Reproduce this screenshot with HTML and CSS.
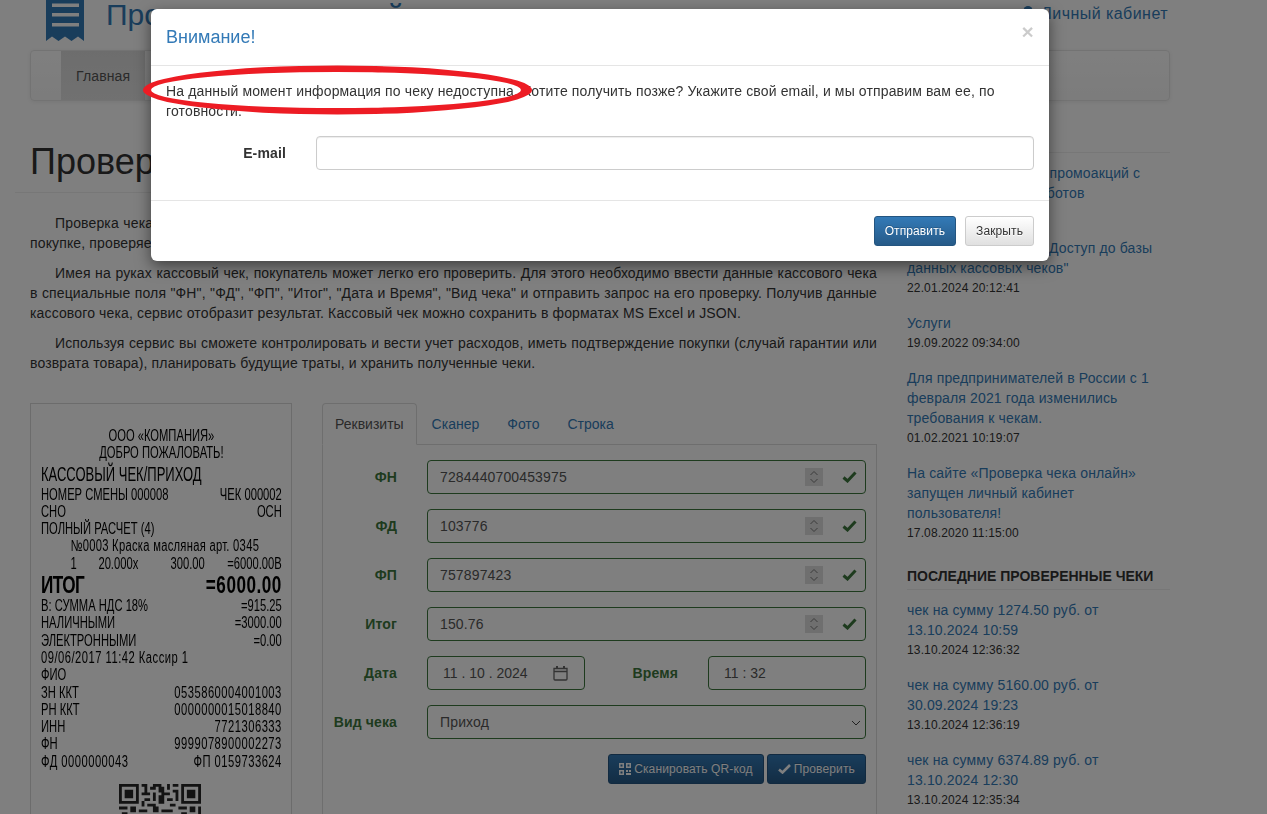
FILE: index.html
```html
<!DOCTYPE html>
<html lang="ru">
<head>
<meta charset="utf-8">
<title>Проверка чека онлайн</title>
<link rel="stylesheet" href="styles.css">
</head>
<body>
<div class="container">
  <header class="site-header">
    <svg class="logo" viewBox="0 0 38 41" width="38" height="41"><path fill="#337ab7" fill-rule="evenodd" d="M0 0H38V41L32 36.500 25.500 41 19 36.500 12.500 41 6 36.500 0 41ZM6 3.500V7H33V3.500ZM6 13V16.500H33V13ZM6 23V26.500H33V23Z"/></svg>
    <a class="site-title">Проверка чека онлайн</a>
    <a class="cabinet">
      <svg class="user-icon" viewBox="0 0 14 16" width="14" height="16"><circle cx="7" cy="4.500" r="4.500" fill="#337ab7"/><path fill="#337ab7" d="M0 16C0 11 3 9 7 9S14 11 14 16Z"/></svg>
      Личный кабинет
    </a>
  </header>
  <nav class="navbar"><a class="nav-item active">Главная</a></nav>
  <div class="layout">
    <main class="main">
      <h1 class="page-title">Проверка чека онлайн</h1>
      <p class="lead">Проверка чека онлайн – это удобный сервис для проверки подлинности кассового чека, полученного вами в магазине при покупке, проверяется по данным фискального накопителя и оператора фискальных данных.</p>
      <p class="lead">Имея на руках кассовый чек, покупатель может легко его проверить. Для этого необходимо ввести данные кассового чека в специальные поля "ФН", "ФД", "ФП", "Итог", "Дата и Время", "Вид чека" и отправить запрос на его проверку. Получив данные кассового чека, сервис отобразит результат. Кассовый чек можно сохранить в форматах MS Excel и JSON.</p>
      <p class="lead">Используя сервис вы сможете контролировать и вести учет расходов, иметь подтверждение покупки (случай гарантии или возврата товара), планировать будущие траты, и хранить полученные чеки.</p>
      <div class="check-area">
        <div class="receipt">
          <div class="receipt-body">
            <div class="r-center">ООО «КОМПАНИЯ»</div>
            <div class="r-center">ДОБРО ПОЖАЛОВАТЬ!</div>
            <div class="r-big">КАССОВЫЙ ЧЕК/ПРИХОД</div>
            <div class="r-row"><span>НОМЕР СМЕНЫ 000008</span><span>ЧЕК 000002</span></div>
            <div class="r-row"><span>СНО</span><span>ОСН</span></div>
            <div class="r-row"><span>ПОЛНЫЙ РАСЧЕТ (4)</span></div>
            <div class="r-row r-indent"><span class="r-wide">№0003 Краска масляная арт. 0345</span></div>
            <div class="r-row r-indent"><span class="r-qty">1</span><span class="r-mul">20.000x</span><span class="r-price">300.00</span><span>=6000.00В</span></div>
            <div class="r-row r-total"><span class="r-total-label">ИТОГ</span><span class="r-total-sum">=6000.00</span></div>
            <div class="r-row"><span>В: СУММА НДС 18%</span><span>=915.25</span></div>
            <div class="r-row"><span>НАЛИЧНЫМИ</span><span>=3000.00</span></div>
            <div class="r-row"><span>ЭЛЕКТРОННЫМИ</span><span>=0.00</span></div>
            <div class="r-row"><span class="r-num">09/06/2017 11:42 Кассир 1</span></div>
            <div class="r-row"><span>ФИО</span></div>
            <div class="r-row"><span>ЗН ККТ</span><span class="r-num">0535860004001003</span></div>
            <div class="r-row"><span>РН ККТ</span><span class="r-num">0000000015018840</span></div>
            <div class="r-row"><span>ИНН</span><span class="r-num">7721306333</span></div>
            <div class="r-row"><span>ФН</span><span class="r-num">9999078900002273</span></div>
            <div class="r-row"><span class="r-num">ФД 0000000043</span><span class="r-num">ФП 0159733624</span></div>
          </div>
          <svg class="qr" viewBox="0 0 29 29" width="82" height="82"><path fill="#262626" fill-rule="evenodd" d="M0 0h7v7h-7zM1 1v5h5v-5zM2 2h3v3h-3zM22 0h7v7h-7zM23 1v5h5v-5zM24 2h3v3h-3zM0 22h7v7h-7zM1 23v5h5v-5zM2 24h3v3h-3zM8 0h2v1h-2zM12 0h3v1h-3zM17 0h1v2h-1zM19 0h2v1h-2zM9 1h1v2h-1zM11 1h2v1h-2zM14 1h2v2h-2zM19 2h2v1h-2zM8 3h3v1h-3zM12 3h1v3h-1zM15 3h3v1h-3zM20 3h1v3h-1zM9 5h2v1h-2zM14 4h2v3h-2zM17 5h2v1h-2zM8 6h1v2h-1zM10 7h3v1h-3zM18 7h2v1h-2zM0 8h3v1h-3zM4 8h2v2h-2zM7 9h3v1h-3zM12 8h2v2h-2zM15 9h4v1h-4zM21 8h3v1h-3zM25 8h2v2h-2zM28 8h1v3h-1zM1 10h2v2h-2zM6 11h4v1h-4zM11 11h1v3h-1zM13 11h3v1h-3zM18 11h2v2h-2zM22 10h2v2h-2zM26 11h1v2h-1zM0 13h2v2h-2zM3 13h4v1h-4zM8 13h2v2h-2zM13 13h1v2h-1zM15 13h2v2h-2zM21 13h3v1h-3zM25 14h4v1h-4z"/></svg>
        </div>
        <div class="check-form">
          <ul class="tabs">
            <li class="tab active">Реквизиты</li>
            <li class="tab">Сканер</li>
            <li class="tab">Фото</li>
            <li class="tab">Строка</li>
          </ul>
          <form class="tab-panel">
            <div class="form-row">
              <label class="field-label">ФН</label>
              <div class="field"><input class="control" type="text" value="7284440700453975"><span class="spinner"><svg viewBox="0 0 18 18" width="18" height="18"><path class="spin-path" d="M5.500 7L9 3.500 12.500 7M5.500 11L9 14.500 12.500 11"/></svg></span><svg class="tick" viewBox="0 0 15 12" width="15" height="12"><path d="M1.500 6.500L5.500 10 13.500 1.500"/></svg></div>
            </div>
            <div class="form-row">
              <label class="field-label">ФД</label>
              <div class="field"><input class="control" type="text" value="103776"><span class="spinner"><svg viewBox="0 0 18 18" width="18" height="18"><path class="spin-path" d="M5.500 7L9 3.500 12.500 7M5.500 11L9 14.500 12.500 11"/></svg></span><svg class="tick" viewBox="0 0 15 12" width="15" height="12"><path d="M1.500 6.500L5.500 10 13.500 1.500"/></svg></div>
            </div>
            <div class="form-row">
              <label class="field-label">ФП</label>
              <div class="field"><input class="control" type="text" value="757897423"><span class="spinner"><svg viewBox="0 0 18 18" width="18" height="18"><path class="spin-path" d="M5.500 7L9 3.500 12.500 7M5.500 11L9 14.500 12.500 11"/></svg></span><svg class="tick" viewBox="0 0 15 12" width="15" height="12"><path d="M1.500 6.500L5.500 10 13.500 1.500"/></svg></div>
            </div>
            <div class="form-row">
              <label class="field-label">Итог</label>
              <div class="field"><input class="control" type="text" value="150.76"><span class="spinner"><svg viewBox="0 0 18 18" width="18" height="18"><path class="spin-path" d="M5.500 7L9 3.500 12.500 7M5.500 11L9 14.500 12.500 11"/></svg></span><svg class="tick" viewBox="0 0 15 12" width="15" height="12"><path d="M1.500 6.500L5.500 10 13.500 1.500"/></svg></div>
            </div>
            <div class="form-row form-row-date">
              <label class="field-label">Дата</label>
              <div class="field"><input class="control control-date" type="text" value="11 . 10 . 2024"><svg class="calendar" viewBox="0 0 15 16" width="15" height="16"><path d="M1 3.500H14V14a1 1 0 0 1-1 1H2a1 1 0 0 1-1-1ZM1 6.500H14"/><path class="cal-pin" d="M4 1V3.500M11 1V3.500"/></svg></div>
              <label class="field-label">Время</label>
              <div class="field"><input class="control control-date" type="text" value="11 : 32"></div>
            </div>
            <div class="form-row">
              <label class="field-label">Вид чека</label>
              <div class="field"><select class="control control-select"><option>Приход</option></select><svg class="chevron" viewBox="0 0 10 6" width="10" height="6"><path d="M1 1L5 5 9 1"/></svg></div>
            </div>
            <div class="form-actions">
              <button class="btn btn-primary" type="button"><svg class="btn-icon" viewBox="0 0 12 12" width="12" height="12"><path fill="#fff" fill-rule="evenodd" d="M0 0h5v5H0zM1.500 1.500v2h2v-2zM7 0h5v5H7zM8.500 1.500v2h2v-2zM0 7h5v5H0zM1.500 8.500v2h2v-2zM7 7h2v2H7zM10 7h2v2h-2zM7 10h5v2H7z"/></svg>Сканировать QR-код</button>
              <button class="btn btn-primary" type="button"><svg class="btn-icon btn-tick" viewBox="0 0 13 10" width="13" height="10"><path d="M1 5.500L4.500 8.500 12 1"/></svg>Проверить</button>
            </div>
          </form>
        </div>
      </div>
    </main>
    <aside class="sidebar">
      <h4 class="side-heading">НОВОСТИ</h4>
      <div class="side-item"><a class="side-link">Проверка чеков всех промоакций с использованием чат-ботов</a><div class="side-date">12.02.2024 11:20:10</div></div>
      <div class="side-item"><a class="side-link">Бесплатный модуль "Доступ до базы данных кассовых чеков"</a><div class="side-date">22.01.2024 20:12:41</div></div>
      <div class="side-item"><a class="side-link">Услуги</a><div class="side-date">19.09.2022 09:34:00</div></div>
      <div class="side-item"><a class="side-link">Для предпринимателей в России с 1 февраля 2021 года изменились требования к чекам.</a><div class="side-date">01.02.2021 10:19:07</div></div>
      <div class="side-item"><a class="side-link">На сайте «Проверка чека онлайн» запущен личный кабинет пользователя!</a><div class="side-date">17.08.2020 11:15:00</div></div>
      <h4 class="side-heading side-heading-next">ПОСЛЕДНИЕ ПРОВЕРЕННЫЕ ЧЕКИ</h4>
      <div class="side-item"><a class="side-link">чек на сумму 1274.50 руб. от 13.10.2024 10:59</a><div class="side-date">13.10.2024 12:36:32</div></div>
      <div class="side-item"><a class="side-link">чек на сумму 5160.00 руб. от 30.09.2024 19:23</a><div class="side-date">13.10.2024 12:36:19</div></div>
      <div class="side-item"><a class="side-link">чек на сумму 6374.89 руб. от 13.10.2024 12:30</a><div class="side-date">13.10.2024 12:35:34</div></div>
    </aside>
  </div>
</div>

<div class="backdrop"></div>
<div class="modal">
  <div class="modal-header">
    <h4 class="modal-title">Внимание!</h4>
    <span class="modal-close">×</span>
  </div>
  <div class="modal-body">
    <p class="modal-text">На данный момент информация по чеку недоступна. Хотите получить позже? Укажите свой email, и мы отправим вам ее, по готовности.</p>
    <div class="modal-form">
      <label class="modal-label">E-mail</label>
      <input class="modal-input" type="text">
    </div>
  </div>
  <div class="modal-footer">
    <button class="btn btn-primary btn-modal" type="button">Отправить</button>
    <button class="btn btn-default btn-modal" type="button">Закрыть</button>
  </div>
  <svg class="annotation" viewBox="0 0 400 52" width="400" height="52"><path fill="#ed1c24" fill-rule="evenodd" d="M1 26A194.500 24.500 0 1 1 390 26A194.500 24.500 0 1 1 1 26ZM9 26A185 18 0 1 0 379 26A185 18 0 1 0 9 26Z"/></svg>
</div>
</body>
</html>
```
FILE: styles.css
```css
* { box-sizing: border-box; }
html, body { margin: 0; height: 814px; overflow: hidden; background: #fff; }
body { font: 14px/20px "Liberation Sans", Arial, sans-serif; color: #333; letter-spacing: .14px; }
a { color: #337ab7; text-decoration: none; }

.container { width: 1170px; margin-left: 15px; }

.site-header { display: flex; align-items: flex-start; height: 50px; padding: 0 17px 0 30px; }
.logo { margin-left: 1px; }
.site-title { margin-left: 22px; font-size: 30px; line-height: 30px; letter-spacing: 0; }
.cabinet { margin-left: auto; display: flex; align-items: flex-start; gap: 6px; font-size: 16px; line-height: 28px; letter-spacing: .45px; }
.user-icon { margin-top: 6px; }

.navbar { margin: 0 15px; height: 51px; padding-left: 30px; border: 1px solid #e7e7e7; border-radius: 4px; background: linear-gradient(#fff, #f8f8f8); box-shadow: 0 1px 5px rgba(0,0,0,.075); }
.nav-item { display: inline-block; padding: 15px; height: 49px; color: #777; }
.nav-item.active { color: #555; background: linear-gradient(#dbdbdb, #e2e2e2); }

.layout { display: grid; grid-template-columns: 877px 293px; }
.main { padding: 0 15px; }
.page-title { margin: 0 -15px 20px; padding: 41px 15px 10px; height: 92px; font-size: 36px; line-height: 40px; font-weight: 500; letter-spacing: 0; color: #333; border-bottom: 1px solid #eee; }
.lead { margin: 0 0 10px; text-align: justify; text-indent: 25px; }

.check-area { display: grid; grid-template-columns: 262px 555px; gap: 30px; margin-top: 30px; }

.receipt { height: 520px; padding: 23px 9px 0 10px; border: 1px solid #d8d8d8; }
.receipt-body { width: 344px; transform: scaleX(.7); transform-origin: left top; color: #000; font-size: 16px; line-height: 17.300px; letter-spacing: 0; filter: blur(.25px); }
.r-center { text-align: center; }
.r-big { font-size: 21px; line-height: 24px; white-space: nowrap; transform: scaleX(.885); transform-origin: left center; }
.r-row { display: flex; justify-content: space-between; white-space: nowrap; }
.r-num { letter-spacing: .7px; }
.r-wide { letter-spacing: .4px; }
.r-indent { padding-left: 42px; justify-content: flex-start; }
.r-qty { width: 40px; }
.r-mul { width: 103px; }
.r-price { margin-right: auto; }
.r-total { font-size: 24.500px; line-height: 25px; font-weight: 700; }
.r-total-label { letter-spacing: -.8px; }
.r-total-sum { letter-spacing: .7px; }
.qr { display: block; margin: 14px 0 0 78px; filter: blur(.5px); }

.tabs { display: flex; gap: 2px; margin: 0; padding: 0; list-style: none; height: 42px; border-bottom: 1px solid #ddd; letter-spacing: 0; }
.tab { height: 41px; padding: 10px 12px; border: 1px solid transparent; color: #337ab7; }
.tab.active { height: 42px; color: #555; background: #fff; border-color: #ddd #ddd #fff; border-radius: 4px 4px 0 0; }

.tab-panel { height: 400px; padding: 15px 10px 0 0; border: 1px solid #ddd; border-top: 0; }
.form-row { display: grid; grid-template-columns: 74px 1fr; column-gap: 30px; margin-bottom: 15px; }
.form-row-date { grid-template-columns: 74px 158px 63px 158px; }
.field-label { font-weight: 700; line-height: 34px; text-align: right; color: #3c763d; white-space: nowrap; }
.field { position: relative; }
.control { display: block; width: 100%; height: 34px; padding: 6px 12px; font: 14px/20px "Liberation Sans", sans-serif; letter-spacing: .14px; color: #555; background: #fff; border: 1px solid #3c763d; border-radius: 4px; }
.control-date { padding-left: 15px; letter-spacing: 0; }
.control-select { appearance: none; background: #fff; }
.spinner { position: absolute; top: 8px; right: 43px; width: 18px; height: 18px; background: #dedede; }
.spinner svg { display: block; }
.spin-path { fill: none; stroke: #777; stroke-width: 1; }
.tick { position: absolute; top: 11px; right: 9px; }
.tick path { fill: none; stroke: #3c763d; stroke-width: 3; }
.calendar { position: absolute; top: 9px; right: 17px; }
.calendar path { fill: none; stroke: #666; stroke-width: 1.300; }
.calendar .cal-pin { stroke-width: 2; }
.chevron { position: absolute; top: 15px; right: 5px; }
.chevron path { fill: none; stroke: #444; stroke-width: 1; }

.form-actions { display: flex; justify-content: flex-end; gap: 3px; }

.btn { display: inline-flex; align-items: center; height: 30px; padding: 0 10px; font: 12px/18px "Liberation Sans", sans-serif; letter-spacing: .14px; border-radius: 3px; white-space: nowrap; }
.btn-primary { color: #fff; background: linear-gradient(#337ab7, #265a88); border: 1px solid #245580; text-shadow: 0 -1px 0 rgba(0,0,0,.2); }
.btn-default { color: #333; background: linear-gradient(#fff, #e0e0e0); border: 1px solid #ccc; text-shadow: 0 1px 0 #fff; }
.btn-icon { margin-right: 3px; }
.btn-tick path { fill: none; stroke: #fff; stroke-width: 2.600; }

.sidebar { padding: 28px 15px 0; }
.side-heading { margin: 0 0 10px; padding-bottom: 3px; font-size: 14px; line-height: 20px; font-weight: 700; letter-spacing: 0; color: #333; border-bottom: 1px solid #eee; }
.side-heading-next { margin-top: 23px; }
.side-item { margin-bottom: 15px; }
.side-link { display: block; }
.side-date { font-size: 12px; color: #333; }

.backdrop { position: fixed; inset: 0; background: rgba(0,0,0,.5); }
.modal { position: absolute; top: 9px; left: 151px; width: 898px; height: 252px; background: #fff; border-radius: 6px; box-shadow: 0 5px 15px rgba(0,0,0,.5); }
.modal-header { position: relative; height: 57px; padding: 15px; border-bottom: 1px solid #e5e5e5; }
.modal-title { margin: 0; font-size: 18px; line-height: 27px; font-weight: 500; letter-spacing: 0; color: #337ab7; }
.modal-close { position: absolute; top: 12px; right: 15px; font-size: 21px; line-height: 21px; font-weight: 700; color: #000; opacity: .2; }
.modal-body { height: 134px; padding: 15px; }
.modal-text { margin: 0 0 15px; }
.modal-form { display: grid; grid-template-columns: 120px 1fr; column-gap: 30px; }
.modal-label { font-weight: 700; line-height: 34px; text-align: right; }
.modal-input { height: 34px; width: 100%; border: 1px solid #ccc; border-radius: 4px; box-shadow: inset 0 1px 1px rgba(0,0,0,.075); }
.modal-footer { display: flex; justify-content: flex-end; gap: 9px; padding: 15px; border-top: 1px solid #e5e5e5; }
.btn-modal { height: 30px; padding: 0 10px; letter-spacing: .1px; }
.annotation { position: absolute; top: 55px; left: -9px; }
```
